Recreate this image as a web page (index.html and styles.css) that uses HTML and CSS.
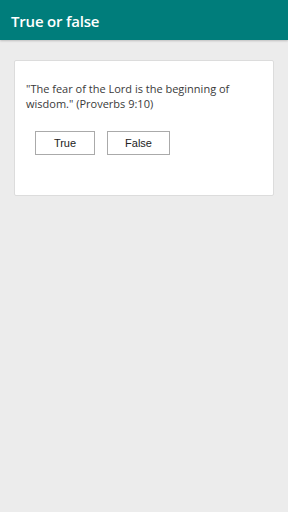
FILE: index.html
```html
<!DOCTYPE html>
<html lang="en">
<head>
    <meta charset="UTF-8">
    <meta name="viewport" content="width=device-width, initial-scale=1.0">
    <title>True or false</title>
    <link rel="stylesheet" href="styles.css">
</head>
<body>
    <header class="app-bar">
        <h1>True or false</h1>
    </header>

    <main class="content">
        <div class="quiz-card">
            <p class="question">"The fear of the Lord is the beginning of wisdom." (Proverbs 9:10)</p>
            <div class="answers">
                <button class="answer-btn">True</button>
                <button class="answer-btn">False</button>
            </div>
        </div>
    </main>
</body>
</html>
```

FILE: styles.css
```css
* {
    margin: 0;
    padding: 0;
    box-sizing: border-box;
}

body {
    background: #ececec;
    font-family: 'Open Sans', sans-serif;
    min-height: 100vh;
}

.app-bar {
    background: #007d7b;
    height: 40px;
    padding: 0 11px;
    display: flex;
    align-items: center;
    box-shadow: 0 1px 2px rgba(0, 0, 0, 0.2);
}

.app-bar h1 {
    color: #fff;
    font-size: 15px;
    font-weight: 600;
    letter-spacing: -0.2px;
    line-height: 1;
    margin-top: 3px;
}

.content {
    padding: 20px 14px;
}

.quiz-card {
    background: #fff;
    border: 1px solid #dcdcdc;
    border-radius: 2px;
    height: 136px;
    padding: 20px 11px 0 11px;
}

.question {
    color: #3a3a3a;
    font-size: 11px;
    line-height: 15px;
}

.answers {
    display: flex;
    gap: 12px;
    margin-top: 20px;
    padding-left: 9px;
}

.answer-btn {
    background: #fff;
    border: 1px solid #aaa;
    height: 24px;
    font-family: 'Liberation Sans', Arial, sans-serif;
    font-size: 11px;
    color: #222;
}

.answer-btn:first-child {
    width: 60px;
}

.answer-btn:last-child {
    width: 63px;
}
```
